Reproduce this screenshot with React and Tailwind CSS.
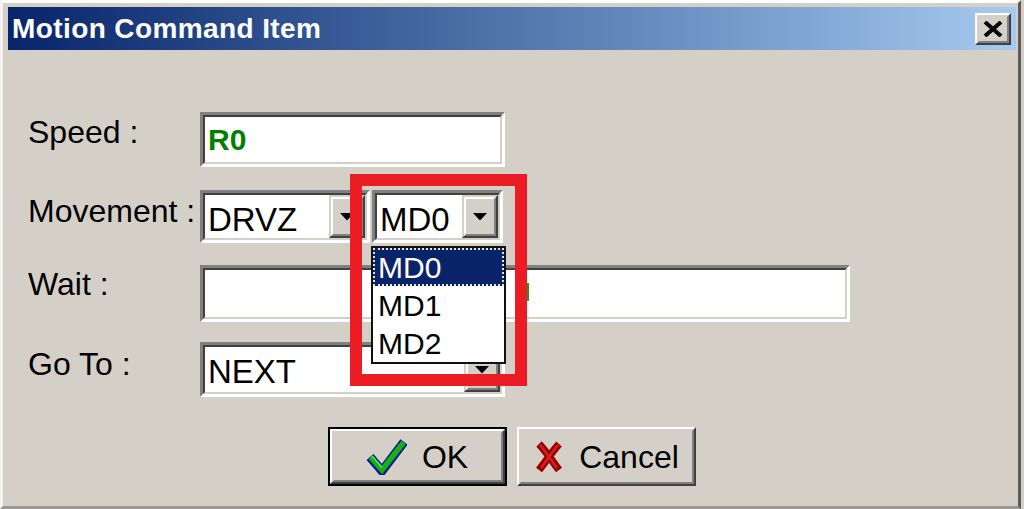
const sans = "font-['Liberation_Sans',Arial,sans-serif]";

function Sunken({ className = "", children }) {
  return (
    <div className={`border-[3px] border-t-[#808080] border-l-[#808080] border-b-white border-r-white ${className}`}>
      <div className="h-full border-2 border-t-[#404040] border-l-[#404040] border-b-[#d4d0c8] border-r-[#d4d0c8] bg-white flex items-center">
        {children}
      </div>
    </div>
  );
}

function DropButton() {
  return (
    <div className="w-[36px] h-full shrink-0 border-2 border-t-[#d4d0c8] border-l-[#d4d0c8] border-b-[#404040] border-r-[#404040] bg-[#d4d0c8]">
      <div className="h-full border-2 border-t-white border-l-white border-b-[#808080] border-r-[#808080] flex items-center justify-center">
        <svg width="14" height="8" viewBox="0 0 14 8">
          <path d="M0 0h14L7 7.5z" fill="#000" />
        </svg>
      </div>
    </div>
  );
}

function Combo({ value, className = "", textClass = "" }) {
  return (
    <Sunken className={className}>
      <span className={`flex-1 pl-[3px] text-[33px] leading-none text-black ${textClass}`}>{value}</span>
      <DropButton />
    </Sunken>
  );
}

function Label({ children, className = "" }) {
  return (
    <div className={`w-[172px] shrink-0 text-[32px] leading-none text-black ${className}`}>{children}</div>
  );
}

function WinButton({ children, isDefault }) {
  return (
    <div className={`w-[179px] h-[59px] ${isDefault ? "border-2 border-black" : ""}`}>
      <div className="h-full border-2 border-t-white border-l-white border-b-[#404040] border-r-[#404040]">
        <div className="h-full border-2 border-t-[#d4d0c8] border-l-[#d4d0c8] border-b-[#808080] border-r-[#808080] flex items-center justify-center gap-[15px] text-[32px] leading-none text-black">
          {children}
        </div>
      </div>
    </div>
  );
}

export default function App() {
  return (
    <div className={`w-[1024px] h-[509px] bg-[#d4d0c8] overflow-hidden ${sans}`}>
      <div className="h-full mr-[3px] border-t-[3px] border-l-[3px] border-r-[3px] border-b-[3px] border-t-white border-l-[#f4f3ef] border-r-[#5a5a5a] border-b-[#9a9892] pt-[4px] pl-[5px] pr-[2px] flex flex-col">
        {/* title bar */}
        <div className="h-[43px] shrink-0 flex items-center justify-between pl-[4px] pr-[5px] bg-gradient-to-r from-[#0a246a] to-[#a6caf0]">
          <span className="text-[28px] font-bold tracking-[0.4px] text-white leading-none">Motion Command Item</span>
          <div className="w-[36px] h-[32px] border-2 border-t-white border-l-white border-b-[#404040] border-r-[#404040] bg-[#d4d0c8]">
            <div className="h-full border-2 border-t-[#d4d0c8] border-l-[#d4d0c8] border-b-[#808080] border-r-[#808080] flex items-center justify-center">
              <svg width="20" height="16" viewBox="0 0 20 16">
                <path d="M2 1L18 15M18 1L2 15" stroke="#000" strokeWidth="4" />
              </svg>
            </div>
          </div>
        </div>

        {/* body */}
        <div className="relative flex-1 flex flex-col pt-[62px]">
          <div className="flex h-[55px] pl-[20px]">
            <Label className="pt-[4px]">Speed :</Label>
            <Sunken className="w-[305px]">
              <span className="pl-[3px] text-[30px] font-bold leading-none text-[#008000]">R0</span>
            </Sunken>
          </div>

          <div className="flex h-[53px] mt-[23px] pl-[20px]">
            <Label className="pt-[5px]">Movement :</Label>
            <Combo value="DRVZ" className="w-[170px]" textClass="pt-[6px]" />
            <Combo value="MD0" className="w-[131px] ml-[2px]" textClass="pt-[6px]" />
          </div>

          <div className="flex h-[57px] mt-[22px] pl-[20px]">
            <Label className="pt-[3px]">Wait :</Label>
            <Sunken className="w-[650px]">
              <span className="ml-[320px] mb-[4px] w-[4px] h-[18px] bg-[#1a9a1a]" />
            </Sunken>
          </div>

          <div className="flex h-[55px] mt-[20px] pl-[20px]">
            <Label className="pt-[6px]">Go To :</Label>
            <Combo value="NEXT" className="w-[305px]" textClass="pt-[4px]" />
          </div>

          <div className="flex justify-center gap-[10px] mt-[30px]">
            <WinButton isDefault>
              <svg width="40" height="36" viewBox="0 0 40 36">
                <path d="M3 18L15 32L37 3" fill="none" stroke="#0a1a8a" strokeWidth="9" strokeLinejoin="miter" />
                <path d="M3.5 18L15 31L36.5 3.5" fill="none" stroke="#16b016" strokeWidth="5.5" strokeLinejoin="miter" />
                <path d="M5 17L15 28.5" fill="none" stroke="#5ee05e" strokeWidth="1.5" />
              </svg>
              <span>OK</span>
            </WinButton>
            <WinButton>
              <svg width="30" height="32" viewBox="0 0 30 32">
                <path d="M5 3C12 10 18 20 25 29M25 3C18 11 12 20 5 29" fill="none" stroke="#9a0000" strokeWidth="7.5" />
                <path d="M6 4C12 11 17 19 23 27M24 4C18 11 13 19 7 27" fill="none" stroke="#d42020" strokeWidth="2.5" />
              </svg>
              <span>Cancel</span>
            </WinButton>
          </div>

          {/* open dropdown list of the MD combo */}
          <div className="absolute left-[363px] top-[196px] w-[135px] border-2 border-[#111] bg-white text-[30px] leading-none text-black">
            <div className="h-[38px] bg-[#0a246a] border-2 border-dotted border-[#e8e4c8] text-white flex items-center pl-[3px] pt-[2px]">MD0</div>
            <div className="h-[38px] flex items-center pl-[5px] pt-[2px]">MD1</div>
            <div className="h-[38px] flex items-center pl-[5px] pt-[2px]">MD2</div>
          </div>

          {/* red highlight frame */}
          <div className="absolute left-[342px] top-[124px] w-[177px] h-[212px] border-[12px] border-[#ec1c24]" />
        </div>
      </div>
    </div>
  );
}
